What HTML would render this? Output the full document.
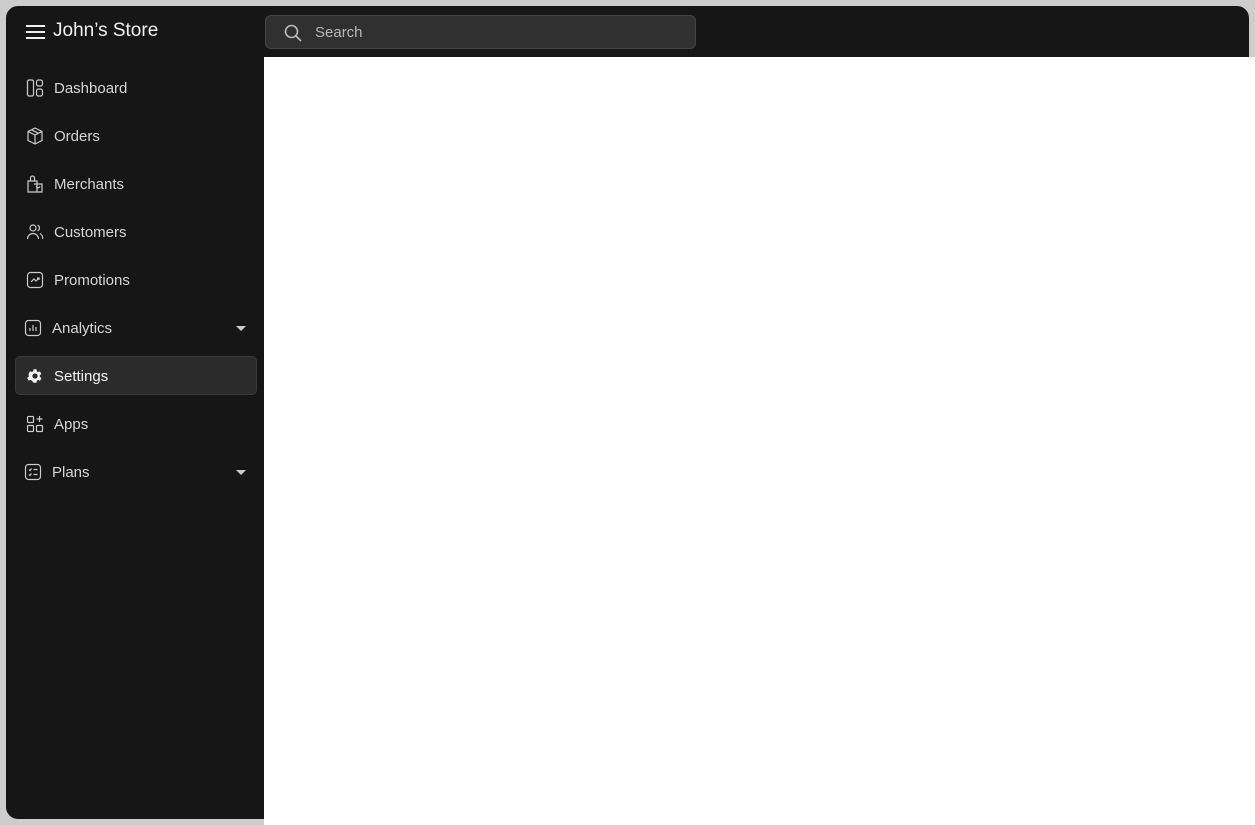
<!DOCTYPE html>
<html><head><meta charset="utf-8"><style>
*{margin:0;padding:0;box-sizing:border-box}
body{width:1255px;height:825px;background:#cdcdcd;position:relative;overflow:hidden;font-family:"Liberation Sans",sans-serif}
.frame{position:absolute;left:6px;top:6px;width:1243px;height:813px;background:#161616;border-radius:12px}
.main{position:absolute;left:264px;top:57px;width:991px;height:768px;background:#fff}
.title{position:absolute;left:53px;top:20px;color:#f0f0f0;font-size:19px}
.ham{position:absolute;left:26px;top:25px}
.search{position:absolute;left:265px;top:15px;width:431px;height:34px;background:#303030;border:1px solid #454545;border-radius:6px}
.search span{position:absolute;left:49px;top:8px;color:#b8b8b8;font-size:15px}
.search svg{position:absolute;left:18px;top:8px}
.item{position:absolute;left:0;width:264px;height:38px;color:#d6d6d6;font-size:15px}
.item span{position:absolute;left:54px;top:11px}
.item svg{position:absolute;left:26px;top:10px}
.sel{position:absolute;left:15px;top:356px;width:242px;height:39px;background:#2b2b2b;border:1px solid #383838;border-radius:5px}
.caret{position:absolute;left:236px;top:17px;width:0;height:0;border-left:5px solid transparent;border-right:5px solid transparent;border-top:5px solid #ccc}
</style></head><body>
<div class="frame"></div>
<div class="main"></div>
<svg class="ham" width="19" height="14" viewBox="0 0 19 14"><path d="M0 1h19M0 7h19M0 13h19" stroke="#eee" stroke-width="2"/></svg>
<div class="title">John’s Store</div>
<div class="search"><svg width="18" height="18" viewBox="0 0 18 18" fill="none" stroke="#bbb" stroke-width="1.6"><circle cx="7.5" cy="7.5" r="6"/><path d="M12 12l5 5"/></svg><span>Search</span></div>
<div class="sel"></div>
<div class="item" style="top:69px"><svg width="18" height="18" viewBox="0 0 18 18" fill="none" stroke="#ccc" stroke-width="1.2"><rect x="1.5" y="1" width="6" height="16" rx="1.5"/><rect x="10.5" y="1" width="6" height="6" rx="2"/><rect x="10.5" y="10" width="6" height="7" rx="2"/></svg><span>Dashboard</span></div>
<div class="item" style="top:117px"><svg width="18" height="18" viewBox="0 0 18 18" fill="none" stroke="#ccc" stroke-width="1.2"><path d="M9 1l7 3.5v9L9 17l-7-3.5v-9z M2 4.5L9 8l7-3.5 M9 8v9 M5.5 2.8l7 3.5"/></svg><span>Orders</span></div>
<div class="item" style="top:165px"><svg width="18" height="18" viewBox="0 0 18 18" fill="none" stroke="#ccc" stroke-width="1.2"><path d="M2 6h9v11H2z M4.5 6V3a2 2 0 0 1 4 0v3 M8 9h8v8H8 M10 11.5q2 2.5 4 0"/></svg><span>Merchants</span></div>
<div class="item" style="top:213px"><svg width="18" height="18" viewBox="0 0 18 18" fill="none" stroke="#ccc" stroke-width="1.2"><circle cx="7" cy="5" r="3"/><path d="M1.5 16a5.5 5.5 0 0 1 11 0 M11.5 2.2a3 3 0 0 1 0 5.6 M14 10.5a5 5 0 0 1 2.5 5.5"/></svg><span>Customers</span></div>
<div class="item" style="top:261px"><svg width="18" height="18" viewBox="0 0 18 18" fill="none" stroke="#ccc" stroke-width="1.2"><rect x="1.5" y="1.5" width="15" height="15" rx="3"/><path d="M5 11l3-3 2 2 3-3 M11 7h2v2"/></svg><span>Promotions</span></div>
<div class="item" style="top:309px"><svg style="left:24px" width="18" height="18" viewBox="0 0 18 18" fill="none" stroke="#ccc" stroke-width="1.2"><rect x="1.5" y="1.5" width="15" height="15" rx="3"/><path d="M6 12V9 M9 12V6 M12 12V8"/></svg><span style="left:52px">Analytics</span><div class="caret"></div></div>
<div class="item" style="top:357px;color:#f4f4f4"><svg width="18" height="18" viewBox="0 0 24 24" fill="#f4f4f4"><path d="M19.4 13a7.5 7.5 0 0 0 0-2l2.1-1.6-2-3.5-2.5 1a7.6 7.6 0 0 0-1.7-1L15 3h-4l-.4 2.7a7.6 7.6 0 0 0-1.7 1l-2.5-1-2 3.5L4.6 11a7.5 7.5 0 0 0 0 2l-2.1 1.6 2 3.5 2.5-1a7.6 7.6 0 0 0 1.7 1L11 21h4l.4-2.7a7.6 7.6 0 0 0 1.7-1l2.5 1 2-3.5zM13 15.5a3.5 3.5 0 1 1 0-7 3.5 3.5 0 0 1 0 7z" transform="translate(-1 0)"/></svg><span>Settings</span></div>
<div class="item" style="top:405px"><svg width="18" height="18" viewBox="0 0 18 18" fill="none" stroke="#ccc" stroke-width="1.2"><rect x="1.5" y="1.5" width="6" height="6" rx="1"/><rect x="1.5" y="10.5" width="6" height="6" rx="1"/><rect x="10.5" y="10.5" width="6" height="6" rx="1"/><path d="M13.5 1v6 M10.5 4h6"/></svg><span>Apps</span></div>
<div class="item" style="top:453px"><svg style="left:24px" width="18" height="18" viewBox="0 0 18 18" fill="none" stroke="#ccc" stroke-width="1.2"><rect x="1.5" y="1.5" width="15" height="15" rx="3"/><path d="M5 6.5l1 1 1.5-2 M9.5 6.5h4 M5 11.5l1 1 1.5-2 M9.5 11.5h4"/></svg><span style="left:52px">Plans</span><div class="caret"></div></div>
</body></html>
